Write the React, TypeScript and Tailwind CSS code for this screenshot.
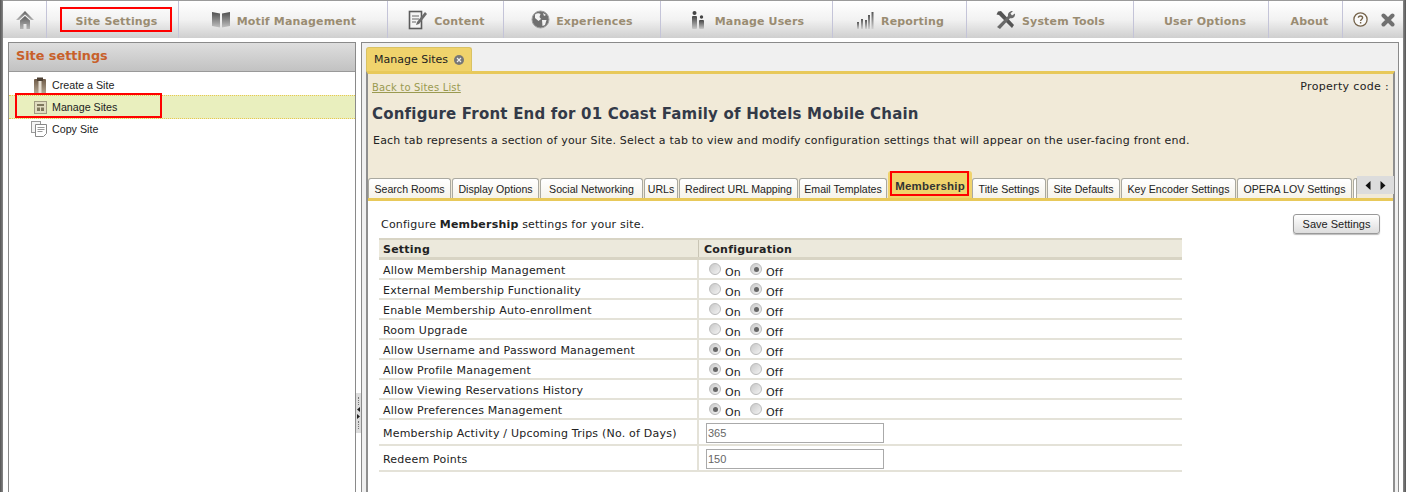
import React from "react";

const V = "font-['DejaVu_Sans',Verdana,sans-serif]";
const A = "font-['Liberation_Sans',Arial,sans-serif]";

function Grad({ id, from, to }: { id: string; from: string; to: string }) {
  return (
    <defs>
      <linearGradient id={id} x1="0" y1="0" x2="0" y2="1">
        <stop offset="0" stopColor={from} />
        <stop offset="1" stopColor={to} />
      </linearGradient>
    </defs>
  );
}

const HomeIcon = () => (
  <svg width="20" height="20" viewBox="0 0 20 20">
    <Grad id="h1" from="#5f5f5f" to="#b5b5b5" />
    <path d="M10 1 L19 10 L16 10 L10 4.5 L4 10 L1 10 Z" fill="url(#h1)" />
    <path d="M5 10.5 L10 6 L15 10.5 V19 H11.5 V14 H8.5 V19 H5 Z" fill="url(#h1)" />
  </svg>
);
const BookIcon = () => (
  <svg width="20" height="17" viewBox="0 0 20 17">
    <Grad id="b1" from="#505050" to="#c0c0c0" />
    <path d="M1 1 L9 2.5 V16.5 L1 15 Z M11 2.5 L19 1 V15 L11 16.5 Z" fill="url(#b1)" />
  </svg>
);
const NoteIcon = () => (
  <svg width="20" height="20" viewBox="0 0 20 20">
    <rect x="1.5" y="1.5" width="12" height="17" fill="#f4f4f4" stroke="#5c5c5c" strokeWidth="1.6" />
    <path d="M4 6h7M4 9h7M4 12h4" stroke="#666" strokeWidth="1.2" />
    <path d="M8 15 L9 12 L17 2 L19 4 L11 14 Z" fill="#6b6b6b" />
  </svg>
);
const GlobeIcon = () => (
  <svg width="19" height="19" viewBox="0 0 19 19">
    <circle cx="9.5" cy="9.5" r="8.5" fill="#707070" stroke="#a0a0a0" strokeWidth="1" />
    <path d="M4 4.5 C6 3 8 3 9.5 4 L8.5 7 L10 9 L7.5 11 L4 8 Z M11 10 L15.5 10 L14 15 L11.5 16 Z M12 3 L15 5 L13 6 Z" fill="#f2f2f2" />
  </svg>
);
const UsersIcon = () => (
  <svg width="14" height="18" viewBox="0 0 14 18">
    <Grad id="u1" from="#444" to="#c8c8c8" />
    <circle cx="3.5" cy="2" r="2" fill="#444" />
    <rect x="1" y="5" width="5" height="13" rx="1" fill="url(#u1)" />
    <circle cx="10.5" cy="6" r="1.7" fill="#444" />
    <rect x="8" y="9" width="5" height="9" rx="1" fill="url(#u1)" />
  </svg>
);
const BarsIcon = () => (
  <svg width="18" height="18" viewBox="0 0 18 18">
    <Grad id="r1" from="#555" to="#d0d0d0" />
    <rect x="1" y="11" width="2" height="7" fill="url(#r1)" />
    <rect x="5" y="8" width="2" height="10" fill="url(#r1)" />
    <rect x="9" y="9" width="2" height="9" fill="url(#r1)" />
    <rect x="12" y="4" width="2" height="14" fill="url(#r1)" />
    <rect x="15.5" y="1" width="2" height="17" fill="url(#r1)" />
  </svg>
);
const ToolsIcon = () => (
  <svg width="22" height="20" viewBox="0 0 22 20">
    <path d="M3 1.5 L6 1 L19 15 L17 18 L4 5 L1.5 4.5 Z" fill="#555" />
    <path d="M2 17 L13 6 C12.5 3 15 0.5 18 1 L15.5 3.5 L17 5.5 L20 3.5 C20.5 6.5 18 9 15 8.2 L5 19 Z" fill="#6a6a6a" />
  </svg>
);
const HelpIcon = () => (
  <svg width="15" height="15" viewBox="0 0 15 15">
    <circle cx="7.5" cy="7.5" r="6.6" fill="#fafafa" stroke="#75634a" strokeWidth="1.3" />
    <path d="M5.4 5.8 C5.4 3.4 9.6 3.4 9.6 5.8 C9.6 7.2 7.6 7.3 7.6 9" fill="none" stroke="#75634a" strokeWidth="1.4" />
    <rect x="6.9" y="10" width="1.4" height="1.5" fill="#75634a" />
  </svg>
);
const CloseIcon = () => (
  <svg width="14" height="14" viewBox="0 0 14 14">
    <path d="M2.5 2.5 L11.5 11.5 M11.5 2.5 L2.5 11.5" stroke="#707070" strokeWidth="4" strokeLinecap="round" />
  </svg>
);
const CreateIcon = () => (
  <svg width="14" height="17" viewBox="0 0 14 17">
    <Grad id="c1" from="#6e5b48" to="#b7a995" />
    <rect x="1" y="2" width="12" height="15" rx="1" fill="url(#c1)" />
    <rect x="4" y="0.5" width="6" height="3.5" fill="#4d4034" />
    <rect x="5.5" y="4" width="3" height="13" fill="#e6dfd4" />
  </svg>
);
const ManageIcon = () => (
  <svg width="13" height="13" viewBox="0 0 13 13">
    <rect x="0.5" y="0.5" width="12" height="12" fill="#e0dcc0" stroke="#a09a80" />
    <rect x="3" y="3" width="7" height="2" fill="#7e775c" />
    <rect x="3" y="6.5" width="3" height="3.5" fill="#7e775c" />
    <rect x="7" y="6.5" width="3" height="3.5" fill="#7e775c" />
  </svg>
);
const CopyIcon = () => (
  <svg width="16" height="16" viewBox="0 0 16 16">
    <rect x="0.5" y="0.5" width="9" height="11" fill="#f4f4f4" stroke="#999" />
    <path d="M4.5 3.5 H15.5 V12.5 L12.5 15.5 H4.5 Z" fill="#fff" stroke="#888" />
    <path d="M6.5 6.5h7M6.5 8.5h7M6.5 10.5h5" stroke="#999" />
  </svg>
);

const navItems: { label: string; w: string; icon?: React.ReactNode; cls: string }[] = [
  { label: "Motif Management", w: "w-[209px]", icon: <BookIcon />, cls: "gap-[6px] pl-[1px]" },
  { label: "Content", w: "w-[116px]", icon: <NoteIcon />, cls: "gap-[6px] pl-[2px]" },
  { label: "Experiences", w: "w-[157px]", icon: <GlobeIcon />, cls: "gap-[6px]" },
  { label: "Manage Users", w: "w-[172px]", icon: <UsersIcon />, cls: "gap-[10px] pl-[2px]" },
  { label: "Reporting", w: "w-[134px]", icon: <BarsIcon />, cls: "gap-[7px] pl-[1px]" },
  { label: "System Tools", w: "w-[167px]", icon: <ToolsIcon />, cls: "gap-[5px]" },
  { label: "User Options", w: "w-[135px]", cls: "pl-[8px]" },
  { label: "About", w: "w-[74px]", cls: "pl-[8px]" },
];

const NavLabel = ({ children }: { children: React.ReactNode }) => (
  <span className={`${V} pt-[4px] text-[11px] leading-[16px] font-bold tracking-[0.15px] text-[#9a8c72] whitespace-nowrap`}>{children}</span>
);

function TopNav() {
  return (
    <nav className="flex h-[38px] shrink-0 border-t-[1px] border-[#9a9a9a] bg-gradient-to-b from-[#ffffff] via-[#f2f2f2] to-[#cfcfcf]">
      <div className="flex w-[44px] items-center justify-center border-r border-[#c4c4d8]">
        <HomeIcon />
      </div>
      <div className="flex w-[132px] items-center border-r border-[#c4c4d8] pl-[13px]">
        <div className="flex h-[25px] w-[112px] items-center justify-center border-2 border-[#ff0000] pl-[1px]">
          <NavLabel>Site Settings</NavLabel>
        </div>
      </div>
      {navItems.map((n) => (
        <div key={n.label} className={`flex ${n.w} items-center justify-center ${n.cls} border-r border-[#c4c4d8]`}>
          {n.icon}
          <NavLabel>{n.label}</NavLabel>
        </div>
      ))}
      <div className="flex flex-1 items-center gap-[13px] pl-[10px]">
        <HelpIcon />
        <CloseIcon />
      </div>
    </nav>
  );
}

function Sidebar() {
  return (
    <aside className="flex w-[348px] flex-col border border-b-0 border-[#8a8a8a] bg-white">
      <div className="flex h-[29px] shrink-0 items-start border-b border-[#999] bg-gradient-to-b from-[#dedede] to-[#c2c2c2] pl-[7px] pt-[3px]">
        <span className={`${V} text-[12.8px] font-bold text-[#c8602a]`}>Site settings</span>
      </div>
      <div className="flex h-[23px] items-center pt-[3px]">
        <span className="flex w-[41px] justify-end pr-[3px]"><CreateIcon /></span>
        <span className={`${A} pl-[2px] pt-[1px] text-[10.7px] text-[#222]`}>Create a Site</span>
      </div>
      <div className="relative flex h-[24px] items-center border-y border-dotted border-[#e8c850] bg-[#e9efbe]">
        <span className="flex w-[41px] justify-end pr-[3px]"><ManageIcon /></span>
        <span className={`${A} pl-[2px] text-[10.7px] text-[#222]`}>Manage Sites</span>
        <div className="absolute left-[6px] top-[-3px] h-[25px] w-[147px] border-2 border-[#ff0000]" />
      </div>
      <div className="flex h-[20px] items-center">
        <span className="flex w-[41px] justify-end pr-[3px]"><CopyIcon /></span>
        <span className={`${A} pl-[2px] text-[10.7px] text-[#222]`}>Copy Site</span>
      </div>
    </aside>
  );
}

const tabs: { label: string; w: string; active?: boolean }[] = [
  { label: "Search Rooms", w: "w-[83px]" },
  { label: "Display Options", w: "w-[87px]" },
  { label: "Social Networking", w: "w-[103px]" },
  { label: "URLs", w: "w-[34px]" },
  { label: "Redirect URL Mapping", w: "w-[119px]" },
  { label: "Email Templates", w: "w-[88px]" },
  { label: "Membership", w: "w-[84px]", active: true },
  { label: "Title Settings", w: "w-[74px]" },
  { label: "Site Defaults", w: "w-[73px]" },
  { label: "Key Encoder Settings", w: "w-[115px]" },
  { label: "OPERA LOV Settings", w: "w-[115px]" },
];

function TabStrip() {
  return (
    <div className="flex h-[30px] items-end border-b-[3px] border-[#e8c95a]">
      {tabs.map((t) =>
        t.active ? (
          <div key={t.label} className={`${t.w} relative flex h-[27px] shrink-0 items-start justify-center rounded-t-[3px] bg-[#f0d36c] pt-[8px]`}>
            <span className={`${A} text-[11.5px] leading-[14px] font-bold tracking-[0.2px] text-[#333]`}>{t.label}</span>
            <div className="absolute left-[2px] top-0 h-[25px] w-[79px] border-2 border-[#ff0000]" />
          </div>
        ) : (
          <div key={t.label} className={`${t.w} mr-[1px] flex h-[20px] shrink-0 items-center justify-center rounded-t-[3px] border border-b-0 border-[#aaa9a0] bg-gradient-to-b from-[#ffffff] to-[#f6f3ea]`}>
            <span className={`${A} text-[10.6px] leading-[14px] text-[#222] whitespace-nowrap`}>{t.label}</span>
          </div>
        )
      )}
      <div className="h-[20px] w-[4px] shrink-0 rounded-tl-[3px] border border-b-0 border-[#aaa9a0] bg-white" />
      <div className="mb-[4px] flex h-[18px] w-[37px] shrink-0 items-center justify-center gap-[9px] bg-[#dcdcdc] text-black">
        <svg width="6" height="9" viewBox="0 0 6 9"><path d="M5.5 0 V9 L0.5 4.5 Z" fill="#111" /></svg>
        <svg width="6" height="9" viewBox="0 0 6 9"><path d="M0.5 0 V9 L5.5 4.5 Z" fill="#111" /></svg>
      </div>
    </div>
  );
}

const Radio = ({ on }: { on: boolean }) => (
  <span className="relative inline-block h-[12px] w-[12px] shrink-0 rounded-full border border-[#bbb] bg-gradient-to-br from-[#c8c8c8] to-[#f4f4f4]">
    {on && <span className="absolute left-[2.5px] top-[2.5px] h-[5px] w-[5px] rounded-full bg-[#666]" />}
  </span>
);

const radioRows: [string, boolean][] = [
  ["Allow Membership Management", false],
  ["External Membership Functionality", false],
  ["Enable Membership Auto-enrollment", false],
  ["Room Upgrade", false],
  ["Allow Username and Password Management", true],
  ["Allow Profile Management", true],
  ["Allow Viewing Reservations History", true],
  ["Allow Preferences Management", true],
];
const inputRows: [string, string][] = [
  ["Membership Activity / Upcoming Trips (No. of Days)", "365"],
  ["Redeem Points", "150"],
];

function SettingsTable() {
  return (
    <div className="w-[803px]">
      <div className="flex h-[22px] border-t-2 border-b-[3px] border-t-[#d8d4c4] border-b-[#d8d4c4] bg-[#ece9dc]">
        <div className={`${V} flex w-[320px] items-center border-r border-[#c9c5b5] pl-[4px] pt-[3px] text-[11px] font-bold tracking-[0.23px] text-[#222]`}>Setting</div>
        <div className={`${V} flex flex-1 items-center pl-[5px] pt-[3px] text-[11px] font-bold tracking-[0.23px] text-[#222]`}>Configuration</div>
      </div>
      {radioRows.map(([label, on]) => (
        <div key={label} className="flex h-[20px] border-b-2 border-[#e4e2d8]">
          <div className={`${V} flex w-[320px] items-center border-r-2 border-[#e4e2d8] pl-[4px] pt-[4px] text-[11px] tracking-[0.21px] text-[#222] whitespace-nowrap`}>{label}</div>
          <div className={`${V} flex flex-1 items-center pl-[10px] text-[11px] tracking-[0.21px] text-[#222]`}>
            <Radio on={on} />
            <span className="ml-[4px] mt-[9px] w-[25px]">On</span>
            <Radio on={!on} />
            <span className="ml-[4px] mt-[9px]">Off</span>
          </div>
        </div>
      ))}
      {inputRows.map(([label, val]) => (
        <div key={label} className="flex h-[26px] border-b-2 border-[#e4e2d8]">
          <div className={`${V} flex w-[320px] items-center border-r-2 border-[#e4e2d8] pl-[4px] pt-[4px] text-[11px] tracking-[0.21px] text-[#222] whitespace-nowrap`}>{label}</div>
          <div className="flex flex-1 items-center pl-[7px] pt-[2px]">
            <input
              readOnly
              value={val}
              className={`${A} h-[20px] w-[178px] border border-[#aaa] bg-white pl-[1px] text-[11px] text-[#666]`}
            />
          </div>
        </div>
      ))}
    </div>
  );
}

function MainPanel() {
  return (
    <section className="flex min-w-0 flex-1 flex-col overflow-hidden border-l border-t border-[#8a8a8a] bg-[#f0f0f0] pl-[4px] pt-[4px]">
      <div className="flex h-[24px] w-[106px] shrink-0 items-center gap-[6px] rounded-t-[3px] border border-b-0 border-[#d9c263] bg-[#f0d36c] pl-[7px]">
        <span className={`${V} pt-[2px] text-[11px] text-[#222] whitespace-nowrap`}>Manage Sites</span>
        <svg width="10" height="10" viewBox="0 0 10 10">
          <circle cx="5" cy="5" r="5" fill="#777" />
          <path d="M3 3 L7 7 M7 3 L3 7" stroke="#eee" strokeWidth="1.2" />
        </svg>
      </div>
      <div className="flex w-[1029px] flex-1 flex-col border-x-2 border-t-[3px] border-x-[#8f8f8f] border-t-[#e8c95a] bg-[#f1ead8]">
        <div className="flex h-[23px] shrink-0 items-start justify-between pl-[4px] pr-[4px] pt-[5px]">
          <a className={`${V} text-[10px] leading-[17px] tracking-[0.17px] text-[#9a9a50] underline`}>Back to Sites List</a>
          <span className={`${V} -mt-px text-[11px] leading-[17px] tracking-[0.33px] text-[#222]`}>Property code :</span>
        </div>
        <h1 className={`${V} mt-[7px] pl-[4px] text-[15px] leading-[20px] font-bold tracking-[0.2px] text-[#333a48]`}>
          Configure Front End for 01 Coast Family of Hotels Mobile Chain
        </h1>
        <p className={`${V} mt-[10px] pl-[5px] text-[11px] leading-[14px] tracking-[0.21px] text-[#222]`}>
          Each tab represents a section of your Site. Select a tab to view and modify configuration settings that will appear on the user-facing front end.
        </p>
        <div className="mt-[23px]">
          <TabStrip />
        </div>
        <div className="flex-1 bg-white pl-[11px] pr-[13px]">
          <div className="flex items-start justify-between pt-[13px]">
            <p className={`${V} pl-[2px] pt-[3px] text-[11px] leading-[16px] tracking-[0.2px] text-[#222]`}>
              Configure <b>Membership</b> settings for your site.
            </p>
            <button className={`${A} h-[20px] w-[87px] rounded-[3px] border border-[#999] bg-gradient-to-b from-[#ffffff] to-[#dddddd] text-[11px] text-[#222] shadow-[0_1px_1px_#bbb]`}>
              Save Settings
            </button>
          </div>
          <div className="mt-[4px]">
            <SettingsTable />
          </div>
        </div>
      </div>
    </section>
  );
}

function Splitter() {
  return (
    <div className="flex h-full w-[5px] shrink-0 items-end">
      <div className="mb-[59px] flex h-[40px] w-[5px] flex-col items-center justify-center gap-[2px] bg-[#dcdcdc]">
        <span className="h-[8px] border-l border-dotted border-[#777]" />
        <svg width="3" height="5" viewBox="0 0 3 5"><path d="M3 0 V5 L0 2.5 Z" fill="#222" /></svg>
        <svg width="3" height="5" viewBox="0 0 3 5"><path d="M0 0 V5 L3 2.5 Z" fill="#222" /></svg>
        <span className="h-[8px] border-l border-dotted border-[#777]" />
      </div>
    </div>
  );
}

export default function App() {
  return (
    <div className="flex h-[492px] w-[1406px] overflow-hidden bg-white">
      <div className="w-[3px] shrink-0 bg-gradient-to-r from-[#555] to-[#888]" />
      <div className="flex min-w-0 flex-1 flex-col">
        <TopNav />
        <div className="flex min-h-0 flex-1 pl-[5px] pr-[4px] pt-[4px]">
          <Sidebar />
          <Splitter />
          <MainPanel />
          <div className="w-[1px] shrink-0 bg-[#8a8a8a]" />
        </div>
      </div>
      <div className="w-[3px] shrink-0 bg-gradient-to-r from-[#888] to-[#555]" />
    </div>
  );
}
